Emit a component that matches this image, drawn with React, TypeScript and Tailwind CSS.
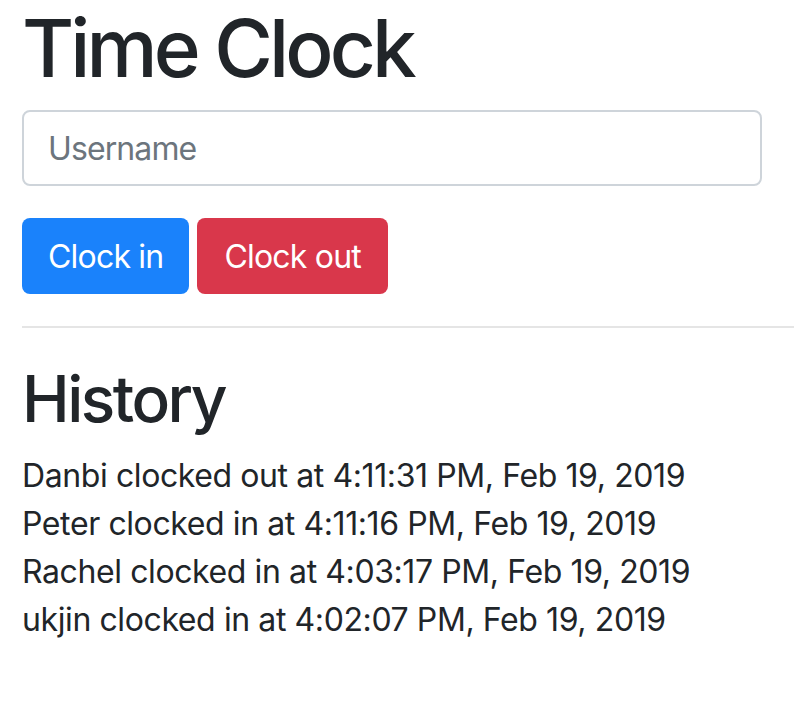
import React from 'react';

const history = [
  'Danbi clocked out at 4:11:31 PM, Feb 19, 2019',
  'Peter clocked in at 4:11:16 PM, Feb 19, 2019',
  'Rachel clocked in at 4:03:17 PM, Feb 19, 2019',
  'ukjin clocked in at 4:02:07 PM, Feb 19, 2019',
];

export default function App() {
  const [username, setUsername] = React.useState('');

  return (
    <div className="min-h-[706px] bg-white pl-[22px] font-['Inter','Liberation_Sans',sans-serif] text-[#212529]">
      <h1 className="m-0 text-[80px] leading-[96px] font-medium tracking-[-3.9px]">Time Clock</h1>

      <input
        value={username}
        onChange={(e) => setUsername(e.target.value)}
        placeholder="Username"
        className="mt-[14px] block h-[76px] w-[740px] rounded-[8px] border-2 border-[#ced4da] px-[24px] text-[32px] tracking-[-0.9px] text-[#495057] outline-none placeholder:text-[#6c757d]"
      />

      <div className="mt-[32px] flex gap-[8px] text-[32px] tracking-[-0.8px] text-white">
        <button className="h-[76px] rounded-[8px] bg-[#1a82fb] px-[26px] pt-[2px]">Clock in</button>
        <button className="h-[76px] rounded-[8px] bg-[#d9374b] px-[27px] pt-[2px]">Clock out</button>
      </div>

      <hr className="mt-[32px] border-0 border-t-2 border-[#e5e5e5]" />

      <h2 className="mt-[32px] text-[64px] leading-[77px] font-medium tracking-[-2.5px]">History</h2>

      <div className="mt-[15px] text-[32px] leading-[48px] tracking-[-0.4px]">
        {history.map((line) => (
          <div key={line}>{line}</div>
        ))}
      </div>
    </div>
  );
}
